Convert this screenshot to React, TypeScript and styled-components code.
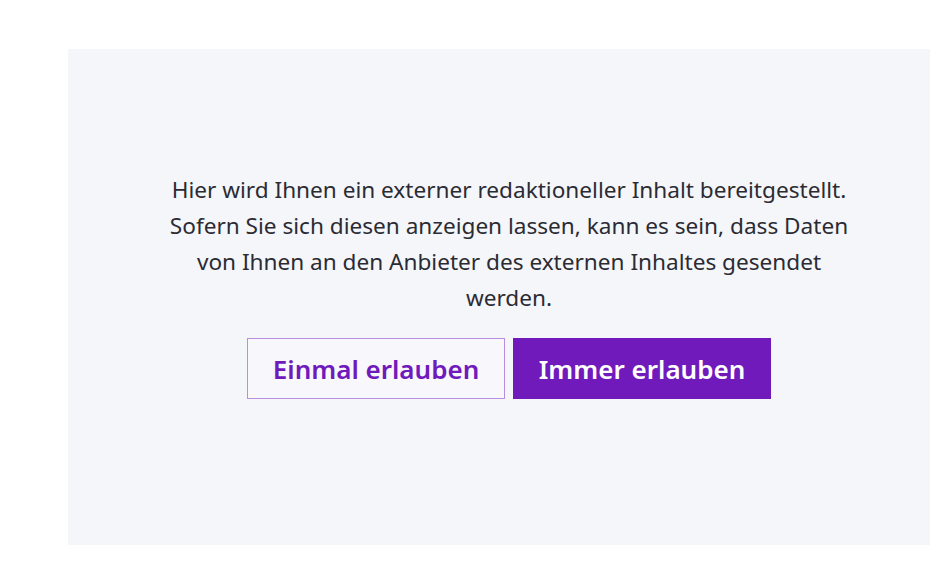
import styled, {createGlobalStyle} from "styled-components";

const GlobalStyle = createGlobalStyle`
    html, body {
        margin: 0;
        padding: 0;
        background: #ffffff;
        overflow: hidden;
    }

    body {
        font-family: "Noto Sans", "Open Sans", sans-serif;
    }
`

const StyledPage = styled.div`
    display: flex;

    width: 100%;
    height: 583px;

    padding: 49px 0 0 68px;
    box-sizing: border-box;
`

const StyledConsentPanel = styled.section`
    display: flex;

    flex-direction: column;
    align-items: center;

    flex-shrink: 0;

    width: 882px;
    height: 496px;

    padding-top: 123px;
    box-sizing: border-box;

    background: #f5f6fa;
`

const StyledNotice = styled.p`
    max-width: 700px;

    margin: 0;

    font-size: 22.6px;
    line-height: 36px;
    text-align: center;

    color: #2b2b33;
`

const StyledActions = styled.div`
    display: flex;

    gap: 8px;

    margin-top: 22px;
`

const StyledButton = styled.button<{ $filled?: boolean }>`
    width: 258px;
    height: 61px;

    padding: 0;

    border: 1px solid ${({$filled}) => $filled ? "#701abc" : "#b98ddf"};

    background: ${({$filled}) => $filled ? "#701abc" : "#f8f7fc"};
    color: ${({$filled}) => $filled ? "#ffffff" : "#701abc"};

    font-family: "Noto Sans", "Open Sans", sans-serif;
    font-size: 26px;
    font-weight: 600;

    cursor: pointer;
`

export default function App() {
	return (
		<>
			<GlobalStyle/>
			<StyledPage>
				<StyledConsentPanel>
					<StyledNotice>
						Hier wird Ihnen ein externer redaktioneller Inhalt bereitgestellt.
						Sofern Sie sich diesen anzeigen lassen, kann es sein, dass Daten
						von Ihnen an den Anbieter des externen Inhaltes gesendet werden.
					</StyledNotice>
					<StyledActions>
						<StyledButton>Einmal erlauben</StyledButton>
						<StyledButton $filled>Immer erlauben</StyledButton>
					</StyledActions>
				</StyledConsentPanel>
			</StyledPage>
		</>
	)
}
